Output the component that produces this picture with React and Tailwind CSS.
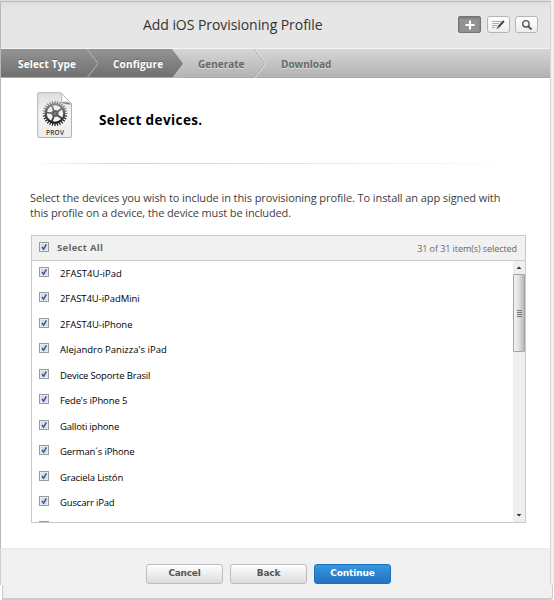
const steps = [
  { label: "Select Type", pos: "w-[97px] pl-[17px]", active: true },
  { label: "Configure", pos: "w-[85px] pl-[15px]", active: true },
  { label: "Generate", pos: "w-[83px] pl-[15px]", active: false },
  { label: "Download", pos: "w-[100px] pl-[15px]", active: false },
];

const devices = [
  { name: "2FAST4U-iPad", fit: "tracking-[0.04px]" },
  { name: "2FAST4U-iPadMini", fit: "tracking-[-0.06px]" },
  { name: "2FAST4U-iPhone", fit: "tracking-[-0.04px]" },
  { name: "Alejandro Panizza's iPad", fit: "tracking-[0px]" },
  { name: "Device Soporte Brasil", fit: "tracking-[-0.17px]" },
  { name: "Fede's iPhone 5", fit: "tracking-[-0.13px]" },
  { name: "Galloti iphone", fit: "tracking-[-0.2px]" },
  { name: "German´s iPhone", fit: "tracking-[-0.13px]" },
  { name: "Graciela Listón", fit: "tracking-[-0.15px]" },
  { name: "Guscarr iPad", fit: "tracking-[-0.17px]" },
];

function Checkbox() {
  return (
    <svg className="block h-[11px] w-[11px] shrink-0" viewBox="0 0 11 11">
      <rect x="0.5" y="0.5" width="9" height="9" fill="#f4f4f4" stroke="#9a9a9a" />
      <rect x="1.6" y="1.6" width="6.8" height="6.8" fill="#d8dce4" />
      <path d="M3 5 4.600 7.200 7.400 2.300" fill="none" stroke="#3b52a0" strokeWidth="1.400" />
    </svg>
  );
}

function ProvIcon() {
  const teeth = Array.from({ length: 28 }, (_, i) => (i * 360) / 28);
  return (
    <svg className="block h-[47px] w-[36px] shrink-0" viewBox="0 0 36 47">
      <defs>
        <linearGradient id="paper" x1="0" y1="0" x2="0" y2="1">
          <stop offset="0" stopColor="#dedede" />
          <stop offset="0.5" stopColor="#f5f5f5" />
          <stop offset="1" stopColor="#ececec" />
        </linearGradient>
        <linearGradient id="gear" gradientUnits="userSpaceOnUse" x1="0" y1="9" x2="0" y2="34">
          <stop offset="0" stopColor="#999" />
          <stop offset="0.5" stopColor="#555" />
          <stop offset="1" stopColor="#080808" />
        </linearGradient>
      </defs>
      <path d="M2 .8H24L34.500 12V44q0 1.500-1.500 1.500H2Q.7 45.500.7 44V2Q.7.8 2 .8Z" fill="url(#paper)" stroke="#b3b3b3" />
      <path d="M24 .8Q26 7 24 10.500 31 9 34.500 12Z" fill="#fff" stroke="#b0b0b0" strokeWidth=".8" />
      <path d="M24 10.500Q30 9.300 34.500 12.500L30 12.200Z" fill="#777" />
      <g stroke="url(#gear)" fill="none">
        {teeth.map((a) => (
          <path key={a} d="M18 9 18.010 12" strokeWidth="1.200" stroke={a > 100 && a < 260 ? "#1f1f1f" : "#808080"} transform={`rotate(${a} 18 21.500)`} />
        ))}
        <circle cx="18" cy="21.500" r="9.300" strokeWidth="2.200" />
        <path d="M18 21.500 14.500 13M18 21.500 25.500 16M18 21.500 25 26.500M18 21.500 14.500 30M18 21.500 9 20.500" strokeWidth="1.700" />
      </g>
      <circle cx="18" cy="21.500" r="3.500" fill="#606060" />
      <circle cx="18" cy="21.500" r="1.200" fill="#888" />
      <text x="18" y="42.500" textAnchor="middle" textLength="18" fontSize="6.500" fontFamily="Open Sans, sans-serif" fontWeight="600" fill="#333">PROV</text>
    </svg>
  );
}

function Chevron({ solid, light }) {
  return (
    <svg className="absolute top-0 -right-[1px] z-10 h-[29px] w-[13px]" viewBox="0 0 13 29">
      {solid && (
        <>
          <defs>
            <linearGradient id="rest" x1="0" y1="0" x2="0" y2="1">
              <stop offset="0" stopColor="#d5d5d5" />
              <stop offset="1" stopColor="#b3b3b3" />
            </linearGradient>
          </defs>
          <path d="M1 0 12 14.500 1 29H13V0Z" fill="url(#rest)" />
        </>
      )}
      {light && <path d="M0 0 11 14.500 0 29" fill="none" stroke="#a3a3a3" strokeWidth=".8" />}
      {!solid && <path d="M1 0 12 14.500 1 29" fill="none" stroke={light ? "#e4e4e4" : "#b9b9b9"} strokeWidth=".9" />}
    </svg>
  );
}

function ToolButton({ dark, children }) {
  return (
    <div className={dark
      ? "flex h-[17px] w-[23px] items-center justify-center rounded-[2px] border border-[#737373] bg-[#929292] shadow-[inset_0_1px_2px_#747474]"
      : "flex h-[17px] w-[23px] items-center justify-center rounded-[3px] border border-[#b5b5b5] bg-linear-to-b from-white to-[#ededed]"}>
      {children}
    </div>
  );
}

function Button({ primary, children }) {
  return (
    <div className={primary
      ? "flex h-[20px] w-[77px] items-center justify-center rounded-[3px] border border-[#1c70bd] bg-linear-to-b from-[#3796df] to-[#2472c3] text-[9px] tracking-[-0.15px] text-white"
      : "flex h-[20px] w-[77px] items-center justify-center rounded-[3px] border border-[#bdbdbd] bg-linear-to-b from-[#fefefe] to-[#dcdcdc] text-[9px] tracking-[-0.25px] text-[#555]"}>
      {children}
    </div>
  );
}

export default function App() {
  return (
    <div className="flex h-[600px] w-[554px] flex-col overflow-hidden bg-[#f0f0f0] font-['Open_Sans',sans-serif] whitespace-nowrap">
      <div className="h-[2px] w-[551px] shrink-0 border-b border-[#b9b9b9] bg-[#dedede]" />
      <div className="flex h-[546px] w-[551px] shrink-0 flex-col border-r border-l border-r-[#d5d5d5] border-l-[#b8b8b8] bg-white">
        <header className="flex h-[47px] shrink-0 items-center border-b border-[#f4f4f4] bg-linear-to-b from-[#dedede] via-[#e6e6e6] via-15% to-[#e6e6e6] pr-[11px] pb-px pl-[142px]">
          <h1 className="w-[315px] text-[14px] leading-[20px] tracking-[-0.06px] text-[#333]">Add iOS Provisioning Profile</h1>
          <div className="flex gap-[5.500px]">
            <ToolButton dark>
              <svg className="h-[10px] w-[10px]" viewBox="0 0 10 10"><path d="M5 .5V9.500M.5 5H9.500" stroke="#fff" strokeWidth="2" /></svg>
            </ToolButton>
            <ToolButton>
              <svg className="h-[12px] w-[15px]" viewBox="0 0 15 12">
                <path d="M1 2.500H10M1 4.500H8M1 6.500H6M1 8.500H4" stroke="#a5a5a5" strokeWidth=".9" />
                <path d="M7.300 8 12.800 2" stroke="#444" strokeWidth="2" />
                <path d="M6.500 7.500 5.500 10 8 9Z" fill="#555" />
              </svg>
            </ToolButton>
            <ToolButton>
              <svg className="h-[12px] w-[12px]" viewBox="0 0 12 12">
                <circle cx="4.900" cy="4.800" r="3.200" fill="none" stroke="#555" strokeWidth="1.400" />
                <path d="M7 7 10.500 10.500" stroke="#555" strokeWidth="2" />
              </svg>
            </ToolButton>
          </div>
        </header>
        <nav className="flex h-[29px] shrink-0 border-b border-b-[#aaa] bg-linear-to-b from-[#d6d6d6] to-[#b3b3b3]">
          {steps.map((step, i) => (
            <div key={step.label} className={`relative flex items-center pt-[2px] text-[10px] font-bold ${step.pos} ${step.active ? "bg-linear-to-b from-[#949494] to-[#707070] tracking-[0.18px] text-white [text-shadow:0_-1px_0_#666]" : "tracking-[0px] text-[#686868] [text-shadow:0_1px_0_#ddd]"}`}>
              {step.label}
              {i < 3 && <Chevron solid={i === 1} light={i === 2} />}
            </div>
          ))}
        </nav>
        <main className="flex flex-1 flex-col pr-[25px] pl-[30px]">
          <div className="mt-[14px] flex h-[48px] pl-[6px]">
            <ProvIcon />
            <h2 className="mt-[18px] ml-[26px] text-[13.500px] leading-[20px] font-bold tracking-[0.4px] text-black">Select devices.</h2>
          </div>
          <div className="mt-[23px] h-px bg-linear-to-r from-transparent via-[#d2d2d2] via-20% to-transparent" />
          <p className="mt-[26px] -ml-px text-[11px] leading-[15px] text-[#404040]">
            <span className="block tracking-[-0.09px]">Select the devices you wish to include in this provisioning profile. To install an app signed with</span>
            <span className="block tracking-[-0.13px]">this profile on a device, the device must be included.</span>
          </p>
          <section className="mt-[15px] flex h-[288px] w-[495px] flex-col border border-[#c9c9c9]">
            <div className="flex h-[25px] shrink-0 items-center border-b border-[#c9c9c9] bg-[#f1f1f1] pr-[8px] pl-[7px]">
              <div className="pb-[2px]"><Checkbox /></div>
              <span className="ml-[7px] pt-px text-[9.500px] font-bold tracking-[0.3px] text-[#666]">Select All</span>
              <span className="ml-auto pt-px text-[9px] tracking-[-0.07px] text-[#686868]">31 of 31 item(s) selected</span>
            </div>
            <div className="flex min-h-0 flex-1">
              <ul className="flex-1 overflow-hidden pl-[7px]">
                {devices.map(({ name, fit }) => (
                  <li key={name} className="flex h-[25.500px] items-center">
                    <div className="pb-[3px]"><Checkbox /></div>
                    <span className={`ml-[10px] text-[9.500px] text-black ${fit}`}>{name}</span>
                  </li>
                ))}
                <li className="pt-[5px]"><Checkbox /></li>
              </ul>
              <div className="flex w-[12px] flex-col items-center bg-[#efefef]">
                <svg className="h-[13px] w-[12px] shrink-0" viewBox="0 0 12 13"><path d="M3.500 8 6 5.500 8.500 8Z" fill="#333" /></svg>
                <div className="flex h-[78px] w-[12px] items-center justify-center rounded-[1px] border border-[#a5a5a5] bg-linear-to-r from-[#f3f3f3] via-[#dfdfe2] to-[#b8b8bd]">
                  <svg className="h-[7px] w-[5px]" viewBox="0 0 5 7"><path d="M0 .5H5M0 2.500H5M0 4.500H5M0 6.500H5" stroke="#777" /></svg>
                </div>
                <svg className="mt-auto h-[13px] w-[12px] shrink-0" viewBox="0 0 12 13"><path d="M3.500 5H8.500L6 7.500Z" fill="#333" /></svg>
              </div>
            </div>
          </section>
        </main>
      </div>
      <footer className="flex h-[37px] w-[551px] shrink-0 border-t border-r border-l border-t-[#e8e8e8] border-r-[#d5d5d5] border-l-[#cfcfcf] bg-[#f0f0f0] pt-[15px] pl-[145px]">
        <div className="flex gap-[7px] font-['DejaVu_Sans',sans-serif] font-bold">
          <Button>Cancel</Button>
          <Button>Back</Button>
          <Button primary>Continue</Button>
        </div>
      </footer>
      <div className="flex h-[15px] shrink-0 bg-white pl-[2px]">
        <div className="h-[15px] w-[551px] rounded-br-[3px] border-r border-b-2 border-l border-[#cbcbcb] bg-[#f0f0f0]" />
      </div>
    </div>
  );
}
